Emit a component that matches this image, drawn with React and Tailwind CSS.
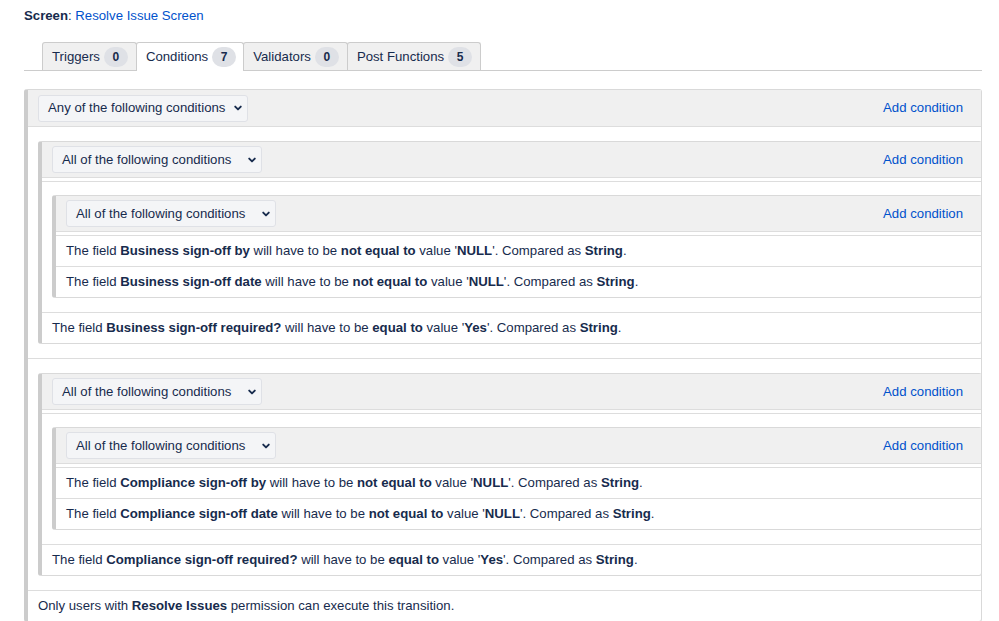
import React from "react";

const B = ({ children }) => <span className="font-bold">{children}</span>;

function Chevron() {
  return (
    <svg width="10" height="10" viewBox="0 0 10 10" className="shrink-0">
      <path d="M2.2 3.6 L5 6.4 L7.8 3.6" fill="none" stroke="#172b4d" strokeWidth="1.9" strokeLinecap="round" strokeLinejoin="round" />
    </svg>
  );
}

function Select({ label }) {
  return (
    <div className="flex h-[27px] w-[210px] items-center justify-between rounded-[3px] border border-[#dfe1e6] bg-[#f4f5f7] pl-[9px] pr-[4px] text-[#172b4d]">
      <span>{label}</span>
      <Chevron />
    </div>
  );
}

function Leaf({ children }) {
  return (
    <div className="border-t border-[#dddddd] py-[6px] pl-[10px] leading-[18px] text-[#172b4d]">
      {children}
    </div>
  );
}

function GroupRow({ children, outer }) {
  return (
    <div className={outer ? "border-t border-[#dddddd] pl-[10px] pt-[14px] pb-[14px]" : "border-t border-[#dddddd] pl-[10px] pt-[13px] pb-[14px]"}>
      {children}
    </div>
  );
}

function Group({ label, outer, children }) {
  return (
    <div className={outer ? "rounded-[3px] border border-[#d9d9d9] border-l-4 border-l-[#cccccc] bg-white" : "-mr-px rounded-[3px] border border-[#d9d9d9] border-l-4 border-l-[#cccccc] bg-white"}>
      <div className={outer ? "flex h-[36px] items-center justify-between bg-[#f0f0f0] pl-[10px] pr-[18px]" : "flex h-[36px] items-center justify-between border-b border-[#dddddd] bg-[#f0f0f0] pl-[10px] pr-[18px]"}>
        <Select label={label} />
        <span className="text-[#0052cc]">Add condition</span>
      </div>
      <div className={outer ? "" : "pt-[3px]"}>{children}</div>
    </div>
  );
}

function Tab({ label, count, active, first }) {
  const cls = active
    ? "relative -mb-px -ml-px flex h-[29px] items-center gap-[4px] rounded-t-[3px] border border-b-0 border-[#cccccc] bg-white pl-[9px] pr-[7px] pb-px"
    : first
    ? "flex h-[28px] items-center gap-[4px] rounded-t-[3px] border border-b-0 border-[#cccccc] bg-[#f0f0f0] pl-[9px] pr-[8px]"
    : "-ml-px flex h-[28px] items-center gap-[4px] rounded-t-[3px] border border-b-0 border-[#cccccc] bg-[#f0f0f0] pl-[9px] pr-[8px]";
  return (
    <div className={cls}>
      <span className="text-[#172b4d]">{label}</span>
      <span className="flex h-[20px] min-w-[24px] items-center justify-center rounded-full bg-[#dfe1e6] px-[8px] text-[12px] font-bold text-[#172b4d]">
        {count}
      </span>
    </div>
  );
}

export default function App() {
  return (
    <div className="min-h-[621px] bg-white font-['Liberation_Sans',Arial,sans-serif] text-[13.2px] text-[#172b4d]">
      <div className="pl-[24px] pt-[8px] leading-[16px]">
        <span className="font-bold">Screen</span>: <span className="text-[#0052cc]">Resolve Issue Screen</span>
      </div>

      <div className="ml-[24px] mr-[17px] mt-[18px] flex items-end border-b border-[#cccccc] pl-[18px]">
        <Tab label="Triggers" count="0" first />
        <Tab label="Conditions" count="7" active />
        <Tab label="Validators" count="0" />
        <Tab label="Post Functions" count="5" />
      </div>

      <div className="ml-[24px] mr-[17px] mt-[18px]">
        <Group label="Any of the following conditions" outer>
          <GroupRow outer>
            <Group label="All of the following conditions">
              <GroupRow>
                <Group label="All of the following conditions">
                  <Leaf>
                    The field <B>Business sign-off by</B> will have to be <B>not equal to</B> value '<B>NULL</B>'. Compared as <B>String</B>.
                  </Leaf>
                  <Leaf>
                    The field <B>Business sign-off date</B> will have to be <B>not equal to</B> value '<B>NULL</B>'. Compared as <B>String</B>.
                  </Leaf>
                </Group>
              </GroupRow>
              <Leaf>
                The field <B>Business sign-off required?</B> will have to be <B>equal to</B> value '<B>Yes</B>'. Compared as <B>String</B>.
              </Leaf>
            </Group>
          </GroupRow>
          <GroupRow outer>
            <Group label="All of the following conditions">
              <GroupRow>
                <Group label="All of the following conditions">
                  <Leaf>
                    The field <B>Compliance sign-off by</B> will have to be <B>not equal to</B> value '<B>NULL</B>'. Compared as <B>String</B>.
                  </Leaf>
                  <Leaf>
                    The field <B>Compliance sign-off date</B> will have to be <B>not equal to</B> value '<B>NULL</B>'. Compared as <B>String</B>.
                  </Leaf>
                </Group>
              </GroupRow>
              <Leaf>
                The field <B>Compliance sign-off required?</B> will have to be <B>equal to</B> value '<B>Yes</B>'. Compared as <B>String</B>.
              </Leaf>
            </Group>
          </GroupRow>
          <Leaf>
            Only users with <B>Resolve Issues</B> permission can execute this transition.
          </Leaf>
        </Group>
      </div>
    </div>
  );
}
